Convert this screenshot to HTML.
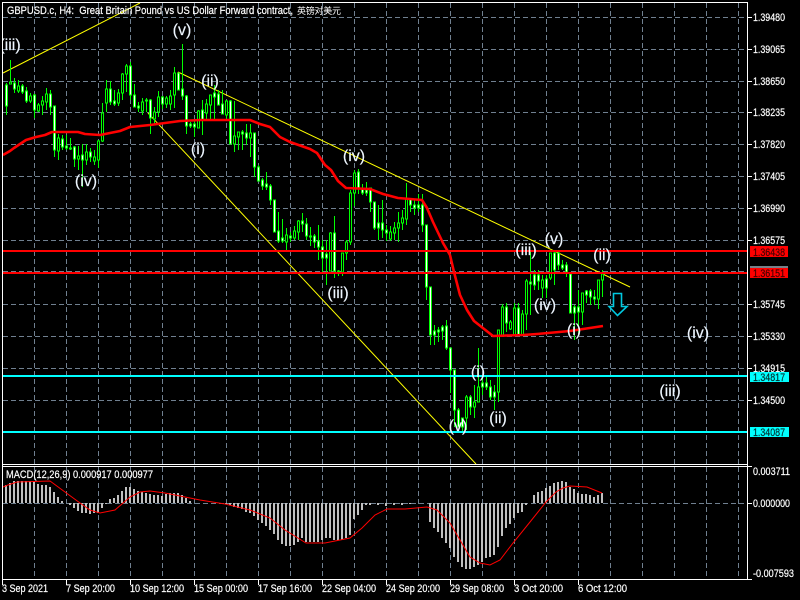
<!DOCTYPE html>
<html><head><meta charset="utf-8"><style>
html,body{margin:0;padding:0;background:#000;width:800px;height:600px;overflow:hidden}
svg{display:block;position:absolute;left:0;top:0}
text{font-family:"Liberation Sans","Noto Sans CJK SC",sans-serif;fill:#fff;white-space:pre}
.w{font-size:16px;fill:#eef6ff;text-anchor:middle;stroke:#eef6ff;stroke-width:.15}
.a{font-size:11px;stroke:#fff;stroke-width:.2}
.t{font-size:11px;stroke-width:.2}
</style></head><body>
<svg width="800" height="600" viewBox="0 0 800 600" xmlns="http://www.w3.org/2000/svg">
<rect width="800" height="600" fill="#000"/>
<!-- grid -->
<g stroke="#708090" stroke-width="1" stroke-dasharray="5 3" fill="none" shape-rendering="crispEdges">
<path d="M3 17.5H747M3 49.5H747M3 81.5H747M3 112.5H747M3 144.5H747M3 176.5H747M3 208.5H747M3 240.5H747M3 271.5H747M3 304.5H747M3 336.5H747M3 368.5H747M3 400.5H747M3 431.5H747"/>
<path d="M34.5 3V464M66.5 3V464M98.5 3V464M130.5 3V464M162.5 3V464M194.5 3V464M226.5 3V464M258.5 3V464M290.5 3V464M322.5 3V464M354.5 3V464M386.5 3V464M418.5 3V464M450.5 3V464M482.5 3V464M514.5 3V464M546.5 3V464M578.5 3V464M610.5 3V464M642.5 3V464M674.5 3V464M706.5 3V464M738.5 3V464"/>
<path d="M34.5 467V579M66.5 467V579M98.5 467V579M130.5 467V579M162.5 467V579M194.5 467V579M226.5 467V579M258.5 467V579M290.5 467V579M322.5 467V579M354.5 467V579M386.5 467V579M418.5 467V579M450.5 467V579M482.5 467V579M514.5 467V579M546.5 467V579M578.5 467V579M610.5 467V579M642.5 467V579M674.5 467V579M706.5 467V579M738.5 467V579"/>
<path d="M3 503.5H747"/>
</g>
<!-- yellow trendlines -->
<g stroke="#ffff00" stroke-width="1" fill="none">
<path d="M3 73L140 3"/>
<path d="M178 72L630 287"/>
<path d="M148 113L476 464"/>
</g>
<!-- wicks -->
<path shape-rendering="crispEdges" stroke="#00ff00" fill="none" d="M6.5 83V115M10.5 60V84M14.5 78V93M18.5 80V93M22.5 84V94M26.5 87V103M30.5 93V103M34.5 94V118M38.5 103V112M42.5 96V115M46.5 88V110M50.5 90V115M54.5 106V157M58.5 134V160M62.5 135V150M66.5 135V150M70.5 138V150M74.5 146V167M78.5 146V170M82.5 144V187M86.5 144V165M90.5 148V162M94.5 150V165M98.5 140V168M102.5 103V142M106.5 80V112M110.5 81V105M114.5 90V106M118.5 89V106M122.5 73V100M126.5 64V92M130.5 62V100M134.5 84V107M138.5 102V112M142.5 98V115M146.5 98V112M150.5 99V134M154.5 107V125M158.5 91V117M162.5 96V109M166.5 96V108M170.5 90V110M174.5 67V108M178.5 73V90M182.5 44V100M186.5 95V134M190.5 122V128M194.5 120V137M198.5 110V128M202.5 100V135M206.5 99V120M210.5 95V120M214.5 85V120M218.5 90V98M222.5 90V107M226.5 100V120M230.5 100V127M234.5 101V152M238.5 132V150M242.5 130V150M246.5 124V145M250.5 124V157M254.5 133V177M258.5 165V181M262.5 178V190M266.5 172V190M270.5 184V205M274.5 200V230M278.5 212V243M282.5 219V243M286.5 228V250M290.5 232V242M294.5 226V240M298.5 220V240M302.5 213V232M306.5 218V240M310.5 227V246M314.5 234V248M318.5 225V260M322.5 240V272M326.5 240V285M330.5 232V271M334.5 216V278M338.5 270V276M342.5 253V276M346.5 240V260M350.5 190V245M354.5 170V206M358.5 169V194M362.5 184V195M366.5 182V196M370.5 188V212M374.5 202V230M378.5 205V240M382.5 200V238M386.5 225V241M390.5 226V241M394.5 222V240M398.5 212V242M402.5 210V230M406.5 183V225M410.5 198V212M414.5 200V215M418.5 194V212M422.5 194V232M426.5 225V300M430.5 287V345M434.5 325V345M438.5 327V342M442.5 325V340M446.5 320V350M450.5 348V393M454.5 370V427M458.5 408V427M462.5 418V432M466.5 395V430M470.5 395V415M474.5 385V418M478.5 348V402M482.5 375V395M486.5 375V390M490.5 380V400M494.5 385V410M498.5 330V402M502.5 304V336M506.5 303V332M510.5 320V330M514.5 303V336M518.5 303V336M522.5 310V336M526.5 279V330M530.5 252V315M534.5 270V290M538.5 270V290M542.5 275V298M546.5 275V298M550.5 253V280M554.5 250V285M558.5 250V270M562.5 260V270M566.5 262V277M570.5 274V313M574.5 305V340M578.5 290V333M582.5 293V325M586.5 290V303M590.5 289V305M594.5 290V305M598.5 280V309M602.5 270V297"/>
<!-- bullish bodies -->
<path shape-rendering="crispEdges" stroke="#00ff00" fill="#000" d="M9.5 82h2v2h-2zM17.5 86h2v5h-2zM29.5 96h2v5h-2zM37.5 105h2v6h-2zM41.5 101h2v4h-2zM45.5 94h2v8h-2zM57.5 138h2v13h-2zM77.5 156h2v3h-2zM85.5 152h2v8h-2zM93.5 157h2v4h-2zM97.5 141h2v19h-2zM101.5 113h2v28h-2zM105.5 89h2v14h-2zM117.5 93h2v10h-2zM121.5 74h2v19h-2zM125.5 66h2v8h-2zM141.5 102h2v9h-2zM153.5 112h2v7h-2zM157.5 97h2v15h-2zM165.5 98h2v6h-2zM169.5 96h2v8h-2zM173.5 73h2v22h-2zM197.5 111h2v17h-2zM205.5 104h2v9h-2zM209.5 95h2v10h-2zM225.5 101h2v14h-2zM233.5 136h2v8h-2zM237.5 132h2v5h-2zM249.5 133h2v5h-2zM285.5 235h2v7h-2zM297.5 221h2v11h-2zM293.5 231h2v7h-2zM329.5 233h2v38h-2zM341.5 253h2v19h-2zM345.5 242h2v11h-2zM349.5 193h2v49h-2zM353.5 173h2v20h-2zM389.5 232h2v7h-2zM393.5 228h2v5h-2zM397.5 223h2v5h-2zM401.5 218h2v5h-2zM405.5 199h2v20h-2zM465.5 397h2v21h-2zM473.5 402h2v5h-2zM477.5 387h2v15h-2zM497.5 330h2v62h-2zM501.5 307h2v29h-2zM509.5 322h2v7h-2zM513.5 308h2v27h-2zM521.5 314h2v21h-2zM525.5 281h2v33h-2zM541.5 280h2v8h-2zM549.5 253h2v25h-2zM581.5 293h2v19h-2zM597.5 280h2v19h-2zM601.5 274h2v6h-2z"/>
<!-- bearish bodies -->
<path shape-rendering="crispEdges" stroke="#00ff00" fill="#fff" d="M5.5 85h2v21h-2zM13.5 83h2v6h-2zM21.5 86h2v6h-2zM25.5 91h2v10h-2zM33.5 95h2v15h-2zM49.5 94h2v13h-2zM53.5 106h2v44h-2zM61.5 139h2v8h-2zM65.5 146h2v2h-2zM69.5 148h2v1h-2zM73.5 147h2v12h-2zM81.5 155h2v5h-2zM89.5 152h2v5h-2zM109.5 89h2v13h-2zM113.5 101h2v3h-2zM129.5 66h2v29h-2zM133.5 95h2v12h-2zM137.5 106h2v2h-2zM145.5 100h2v1h-2zM149.5 100h2v18h-2zM161.5 97h2v7h-2zM177.5 73h2v17h-2zM181.5 89h2v7h-2zM185.5 96h2v30h-2zM189.5 124h2v2h-2zM193.5 124h2v3h-2zM201.5 110h2v10h-2zM213.5 93h2v4h-2zM217.5 94h2v11h-2zM221.5 104h2v10h-2zM229.5 101h2v43h-2zM241.5 132h2v2h-2zM245.5 133h2v5h-2zM253.5 133h2v34h-2zM257.5 167h2v14h-2zM261.5 180h2v6h-2zM265.5 184h2v3h-2zM269.5 186h2v14h-2zM273.5 200h2v32h-2zM277.5 231h2v10h-2zM281.5 238h2v3h-2zM289.5 236h2v2h-2zM301.5 221h2v3h-2zM305.5 224h2v12h-2zM309.5 236h2v1h-2zM313.5 236h2v6h-2zM317.5 241h2v6h-2zM321.5 247h2v11h-2zM325.5 254h2v4h-2zM333.5 233h2v38h-2zM337.5 271h2v1h-2zM357.5 172h2v17h-2zM361.5 188h2v5h-2zM365.5 190h2v3h-2zM369.5 188h2v14h-2zM373.5 202h2v26h-2zM377.5 223h2v5h-2zM381.5 223h2v7h-2zM385.5 230h2v3h-2zM409.5 199h2v6h-2zM413.5 205h2v3h-2zM417.5 205h2v3h-2zM421.5 205h2v20h-2zM425.5 225h2v62h-2zM429.5 287h2v48h-2zM433.5 331h2v4h-2zM437.5 330h2v2h-2zM441.5 327h2v4h-2zM445.5 326h2v22h-2zM449.5 348h2v22h-2zM453.5 370h2v40h-2zM457.5 410h2v17h-2zM461.5 418h2v9h-2zM469.5 397h2v10h-2zM481.5 383h2v4h-2zM485.5 383h2v4h-2zM489.5 387h2v10h-2zM493.5 392h2v5h-2zM505.5 307h2v16h-2zM517.5 308h2v27h-2zM529.5 282h2v2h-2zM533.5 275h2v10h-2zM537.5 275h2v6h-2zM545.5 279h2v9h-2zM553.5 253h2v17h-2zM557.5 253h2v12h-2zM561.5 265h2v3h-2zM565.5 265h2v7h-2zM569.5 274h2v39h-2zM573.5 307h2v6h-2zM577.5 307h2v5h-2zM585.5 291h2v4h-2zM589.5 291h2v6h-2zM593.5 297h2v2h-2z"/>
<!-- moving average -->
<path fill="none" stroke="#ff0000" stroke-width="2.6" stroke-linejoin="round" d="M3 155L10 151L14 148L20 144L26 140L36 137L45 135L52 132L78 132L85 134L100 135L120 131L130 127L150 125L180 121L200 120L250 120L260 124L270 127L280 137L290 142L310 149L317 153L325 165L331 170L338 181L346 188L370 189L383 194L398 198L422 200L427 208L433 222L443 243L450 255L454 272L460 295L467 310L474 321L493 336L523 335L537 334L570 331L603 326"/>
<!-- horizontal levels -->
<g shape-rendering="crispEdges">
<rect x="3" y="250" width="745" height="2" fill="#ff0000"/>
<rect x="3" y="272" width="745" height="2" fill="#ff0000"/>
<rect x="3" y="375" width="745" height="2" fill="#00ffff"/>
<rect x="3" y="431" width="745" height="2" fill="#00ffff"/>
</g>
<!-- arrow -->
<path d="M613.5 293.5H621.5V306.5H627L617.5 315.5L609 306.5H613.5Z" fill="#000" stroke="#00c8e0" stroke-width="1.6"/>
<!-- wave labels -->
<text class="w" x="10" y="50">(iii)</text>
<text class="w" x="182" y="35">(v)</text>
<text class="w" x="210" y="86">(ii)</text>
<text class="w" x="198" y="154">(i)</text>
<text class="w" x="86" y="186">(iv)</text>
<text class="w" x="354" y="161">(iv)</text>
<text class="w" x="338" y="298">(iii)</text>
<text class="w" x="526" y="255">(iii)</text>
<text class="w" x="554" y="244">(v)</text>
<text class="w" x="602" y="260">(ii)</text>
<text class="w" x="545" y="310">(iv)</text>
<text class="w" x="574" y="335">(i)</text>
<text class="w" x="698" y="338">(iv)</text>
<text class="w" x="670" y="396">(iii)</text>
<text class="w" x="478" y="377">(i)</text>
<text class="w" x="498" y="423">(ii)</text>
<text class="w" x="458" y="431">(v)</text>
<text class="w" x="749" y="441">(</text>
<!-- MACD bars -->
<path shape-rendering="crispEdges" stroke="#c0c0c0" stroke-width="2" fill="none" d="M6 485V503M10 483V503M14 481V503M18 481V503M22 481V503M26 481V503M30 481V503M34 481V503M38 484V503M42 485V503M46 485V503M50 487V503M54 492V503M58 497V503M62 501V503M70 503V505M74 503V508M78 503V511M82 503V513M86 503V513M90 503V514M94 503V513M98 503V513M102 503V508M106 503V504M110 499V503M114 498V503M118 495V503M122 491V503M126 487V503M130 487V503M134 489V503M138 491V503M142 492V503M146 493V503M150 494V503M154 495V503M158 495V503M162 496V503M166 494V503M170 493V503M174 493V503M178 493V503M182 495V503M186 498V503M190 501V503M226 503V504M230 503V505M234 503V507M238 503V508M242 503V509M246 503V512M250 503V513M254 503V516M258 503V520M262 503V523M266 503V526M270 503V530M274 503V534M278 503V540M282 503V544M286 503V546M290 503V546M294 503V545M298 503V542M302 503V538M306 503V542M310 503V542M314 503V542M318 503V542M322 503V540M326 503V538M330 503V538M334 503V540M338 503V540M342 503V540M346 503V538M350 503V535M354 503V519M358 503V515M362 503V510M366 503V505M370 503V505M378 503V505M386 503V506M394 503V505M402 503V505M410 503V504M430 503V522M434 503V528M438 503V532M442 503V538M446 503V543M450 503V548M454 503V557M458 503V562M462 503V567M466 503V569M470 503V569M474 503V567M478 503V565M482 503V562M486 503V558M490 503V557M494 503V555M498 503V547M502 503V536M506 503V528M510 503V524M514 503V518M518 503V513M522 503V512M526 503V505M534 495V503M538 492V503M542 491V503M546 488V503M550 486V503M554 483V503M558 482V503M562 481V503M566 482V503M570 487V503M574 489V503M578 493V503M582 494V503M586 494V503M590 495V503M594 497V503M598 495V503M602 493V503"/>
<!-- signal line -->
<path fill="none" stroke="#ff0000" stroke-width="1" d="M3 487L8 485L17 482L50 481L65 492L80 503L90 510L100 513L115 510L130 497L140 492L150 491L165 493L185 497L200 500L225 504L250 510L270 518L285 530L306 543L325 543L350 538L362 528L375 515L387 509L405 509L427 507L437 510L450 523L460 540L470 557L480 563L490 565L500 560L513 543L530 522L546 502L556 492L563 488L570 486L587 487L602 493"/>
<!-- covers -->
<rect x="0" y="0" width="2" height="600" fill="#000"/>
<rect x="748" y="0" width="52" height="600" fill="#000"/>
<rect x="0" y="580" width="748" height="20" fill="#000"/>
<rect x="0" y="0" width="800" height="2" fill="#000"/>
<!-- frame -->
<g shape-rendering="crispEdges" fill="#fff">
<rect x="2" y="2" width="746" height="1"/>
<rect x="2" y="2" width="1" height="578"/>
<rect x="747" y="2" width="1" height="578"/>
<rect x="2" y="464" width="746" height="1"/>
<rect x="2" y="466" width="746" height="1"/>
<rect x="2" y="579" width="746" height="1"/>
</g>
<!-- ticks -->
<path shape-rendering="crispEdges" stroke="#fff" fill="none" d="M748 17.5H752M748 49.5H752M748 81.5H752M748 112.5H752M748 144.5H752M748 176.5H752M748 208.5H752M748 240.5H752M748 304.5H752M748 336.5H752M748 368.5H752M748 400.5H752M748 466.5H752M748 503.5H752M748 579.5H752M2.5 580V585M66.5 580V585M130.5 580V585M194.5 580V585M258.5 580V585M322.5 580V585M386.5 580V585M450.5 580V585M514.5 580V585M578.5 580V585"/>
<!-- title -->
<text x="7" y="14" class="a" textLength="286" lengthAdjust="spacingAndGlyphs">GBPUSD.c, H4:  Great Britain Pound vs US Dollar Forward contract,</text>
<text x="297" y="14" style="font-size:9px" textLength="44">英镑对美元</text>
<text x="6" y="478" class="a" textLength="147" lengthAdjust="spacingAndGlyphs">MACD(12,26,9) 0.000917 0.000977</text>
<!-- price labels -->
<text x="753" y="21" class="a" textLength="32" lengthAdjust="spacingAndGlyphs">1.39480</text>
<text x="753" y="53" class="a" textLength="32" lengthAdjust="spacingAndGlyphs">1.39065</text>
<text x="753" y="85" class="a" textLength="32" lengthAdjust="spacingAndGlyphs">1.38650</text>
<text x="753" y="116" class="a" textLength="32" lengthAdjust="spacingAndGlyphs">1.38235</text>
<text x="753" y="148" class="a" textLength="32" lengthAdjust="spacingAndGlyphs">1.37820</text>
<text x="753" y="180" class="a" textLength="32" lengthAdjust="spacingAndGlyphs">1.37405</text>
<text x="753" y="212" class="a" textLength="32" lengthAdjust="spacingAndGlyphs">1.36990</text>
<text x="753" y="244" class="a" textLength="32" lengthAdjust="spacingAndGlyphs">1.36575</text>
<text x="753" y="308" class="a" textLength="32" lengthAdjust="spacingAndGlyphs">1.35745</text>
<text x="753" y="340" class="a" textLength="32" lengthAdjust="spacingAndGlyphs">1.35330</text>
<text x="753" y="372" class="a" textLength="32" lengthAdjust="spacingAndGlyphs">1.34915</text>
<text x="753" y="404" class="a" textLength="32" lengthAdjust="spacingAndGlyphs">1.34500</text>
<g shape-rendering="crispEdges">
<rect x="750" y="266" width="38" height="2" fill="#778088"/>
<rect x="750" y="246" width="38" height="11" fill="#ff0000"/>
<rect x="750" y="268" width="38" height="10" fill="#ff0000"/>
<rect x="750" y="372" width="39" height="10" fill="#00ffff"/>
<rect x="750" y="427" width="39" height="10" fill="#00ffff"/>
</g>
<text x="753" y="256" class="t" style="fill:#400000;stroke:#400000" textLength="32" lengthAdjust="spacingAndGlyphs">1.36438</text>
<text x="753" y="277" class="t" style="fill:#400000;stroke:#400000" textLength="32" lengthAdjust="spacingAndGlyphs">1.36151</text>
<text x="753" y="381" class="t" style="fill:#003030;stroke:#003030" textLength="32" lengthAdjust="spacingAndGlyphs">1.34817</text>
<text x="753" y="436" class="t" style="fill:#003030;stroke:#003030" textLength="32" lengthAdjust="spacingAndGlyphs">1.34087</text>
<text x="753" y="475" class="a" textLength="37" lengthAdjust="spacingAndGlyphs">0.003711</text>
<text x="753" y="507" class="a" textLength="37" lengthAdjust="spacingAndGlyphs">0.000000</text>
<text x="753" y="577" class="a" textLength="41" lengthAdjust="spacingAndGlyphs">-0.007593</text>
<!-- time labels -->
<text x="2" y="592" class="a" textLength="46" lengthAdjust="spacingAndGlyphs">3 Sep 2021</text>
<text x="66" y="592" class="a" textLength="49" lengthAdjust="spacingAndGlyphs">7 Sep 20:00</text>
<text x="130" y="592" class="a" textLength="54" lengthAdjust="spacingAndGlyphs">10 Sep 12:00</text>
<text x="194" y="592" class="a" textLength="54" lengthAdjust="spacingAndGlyphs">15 Sep 00:00</text>
<text x="258" y="592" class="a" textLength="54" lengthAdjust="spacingAndGlyphs">17 Sep 16:00</text>
<text x="322" y="592" class="a" textLength="54" lengthAdjust="spacingAndGlyphs">22 Sep 04:00</text>
<text x="386" y="592" class="a" textLength="54" lengthAdjust="spacingAndGlyphs">24 Sep 20:00</text>
<text x="450" y="592" class="a" textLength="54" lengthAdjust="spacingAndGlyphs">29 Sep 08:00</text>
<text x="514" y="592" class="a" textLength="49" lengthAdjust="spacingAndGlyphs">3 Oct 20:00</text>
<text x="578" y="592" class="a" textLength="49" lengthAdjust="spacingAndGlyphs">6 Oct 12:00</text>
</svg>
</body></html>
